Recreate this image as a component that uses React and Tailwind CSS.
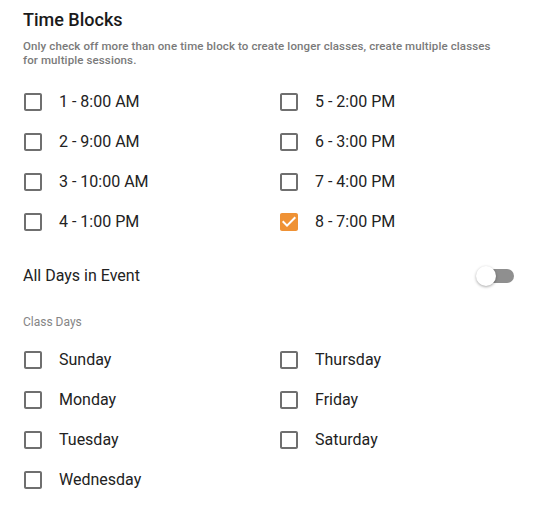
import React, { useState } from "react";

const TIME_BLOCKS = [
  "1 - 8:00 AM",
  "5 - 2:00 PM",
  "2 - 9:00 AM",
  "6 - 3:00 PM",
  "3 - 10:00 AM",
  "7 - 4:00 PM",
  "4 - 1:00 PM",
  "8 - 7:00 PM",
];

const DAYS = [
  "Sunday",
  "Thursday",
  "Monday",
  "Friday",
  "Tuesday",
  "Saturday",
  "Wednesday",
];

const CheckIcon = ({ checked }) =>
  checked ? (
    <svg viewBox="0 0 24 24" className="w-6 h-6 fill-[#ef9235]">
      <path d="M19 3H5c-1.11 0-2 .9-2 2v14c0 1.1.89 2 2 2h14c1.11 0 2-.9 2-2V5c0-1.1-.89-2-2-2zm-9 14l-5-5 1.41-1.41L10 14.17l7.59-7.59L19 8l-9 9z" />
    </svg>
  ) : (
    <svg viewBox="0 0 24 24" className="w-6 h-6 fill-[#6f6f6f]">
      <path d="M19 5v14H5V5h14m0-2H5c-1.1 0-2 .9-2 2v14c0 1.1.9 2 2 2h14c1.1 0 2-.9 2-2V5c0-1.1-.9-2-2-2z" />
    </svg>
  );

const CheckRow = ({ label, checked, onToggle }) => (
  <label className="h-10 flex items-center cursor-pointer select-none">
    <span className="-ml-[2px]" onClick={onToggle}>
      <CheckIcon checked={checked} />
    </span>
    <span className="ml-[14px] text-[16px] text-[#222]">{label}</span>
  </label>
);

export default function App() {
  const [blocks, setBlocks] = useState({ "8 - 7:00 PM": true });
  const [days, setDays] = useState({});
  const [allDays, setAllDays] = useState(false);

  const toggle = (setter) => (key) =>
    setter((prev) => ({ ...prev, [key]: !prev[key] }));

  return (
    <div className="w-[536px] bg-white px-[23px] pt-[8px] font-['Roboto',sans-serif]">
      <h2 className="text-[18px] leading-6 font-medium text-[#1a1a1a]">
        Time Blocks
      </h2>
      <p className="mt-[7px] w-[470px] text-[11.5px] leading-[14px] font-medium tracking-[0.01em] text-[#7a7a7a]">
        Only check off more than one time block to create longer classes, create
        multiple classes for multiple sessions.
      </p>

      <div className="mt-[15px] grid grid-cols-[256px_256px]">
        {TIME_BLOCKS.map((b) => (
          <CheckRow
            key={b}
            label={b}
            checked={!!blocks[b]}
            onToggle={() => toggle(setBlocks)(b)}
          />
        ))}
      </div>

      <div className="mt-[14px] h-10 flex items-center justify-between">
        <span className="text-[16px] text-[#222]">All Days in Event</span>
        <button
          className="relative w-[38px] h-6 mr-[-1px] flex items-center"
          onClick={() => setAllDays(!allDays)}
        >
          <span className="absolute left-[2px] right-0 h-[14px] rounded-full bg-[#8f8f8f]" />
          <span
            className={
              allDays
                ? "absolute left-[18px] w-5 h-5 rounded-full bg-white shadow-[0_1px_3px_rgba(0,0,0,0.35)]"
                : "absolute left-0 w-5 h-5 rounded-full bg-white shadow-[0_1px_3px_rgba(0,0,0,0.35)]"
            }
          />
        </button>
      </div>

      <div className="mt-[18px] text-[12px] leading-4 text-[#858585]">
        Class Days
      </div>

      <div className="mt-[10px] grid grid-cols-[256px_256px] pb-[9px]">
        {DAYS.map((d) => (
          <CheckRow
            key={d}
            label={d}
            checked={!!days[d]}
            onToggle={() => toggle(setDays)(d)}
          />
        ))}
      </div>
    </div>
  );
}
